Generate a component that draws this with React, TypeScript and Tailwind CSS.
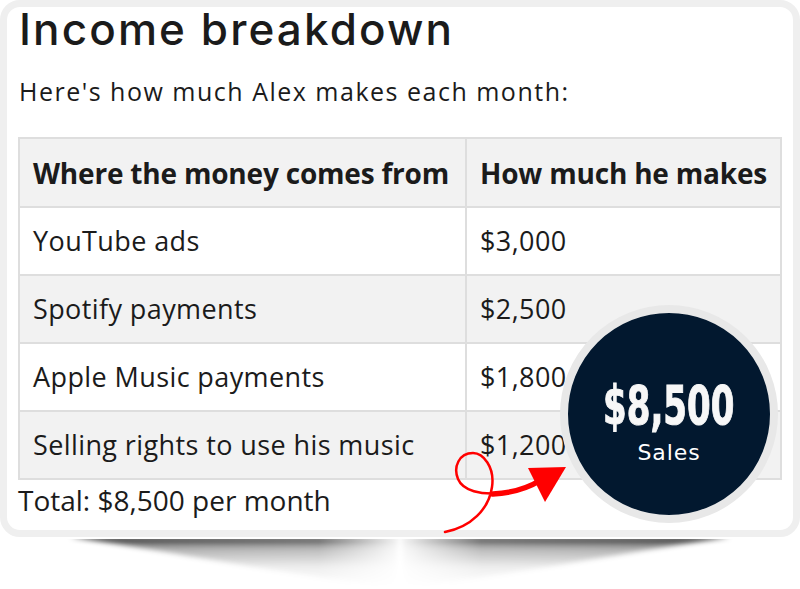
import React from 'react';

const rows = [
  { source: 'YouTube ads', amount: '$3,000' },
  { source: 'Spotify payments', amount: '$2,500' },
  { source: 'Apple Music payments', amount: '$1,800' },
  { source: 'Selling rights to use his music', amount: '$1,200' },
];

const body = { fontFamily: '"Open Sans", "Noto Sans", sans-serif' };

export default function App() {
  return (
    <div className="relative w-[800px] h-[589px] bg-white overflow-hidden">
      {/* card */}
      <div className="relative h-[537px] rounded-[20px] border-[7px] border-[#efefef] bg-white px-[11px]">
        <h1
          className="text-[44px] font-medium leading-[44px] text-[#1b1b1b] tracking-[0.048em] pl-[1px]"
          style={{ fontFamily: 'Inter, "Noto Sans", sans-serif' }}
        >
          Income breakdown
        </h1>
        <p className="mt-[24px] text-[25px] leading-[32px] tracking-[1.5px] text-[#1b1b1b] pl-[1px]" style={body}>
          Here's how much Alex makes each month:
        </p>

        <table className="mt-[30px] w-full border-collapse text-[#1b1b1b]" style={body}>
          <thead>
            <tr className="h-[69px] bg-[#f2f2f2]">
              <th className="w-[447px] border-2 border-[#dedede] pl-[13px] text-left text-[28px] font-bold tracking-[-0.2px]">
                Where the money comes from
              </th>
              <th className="border-2 border-[#dedede] pl-[13px] text-left text-[28px] font-bold tracking-[-0.2px]">
                How much he makes
              </th>
            </tr>
          </thead>
          <tbody>
            {rows.map((r, i) => (
              <tr key={r.source} className={i % 2 === 1 ? 'h-[68px] bg-[#f2f2f2]' : 'h-[68px] bg-white'}>
                <td className="border-2 border-[#dedede] pl-[13px] text-[27px] tracking-[0.4px]">{r.source}</td>
                <td className="border-2 border-[#dedede] pl-[13px] text-[27px] tracking-[0.4px]">{r.amount}</td>
              </tr>
            ))}
          </tbody>
        </table>

        <p className="mt-[2px] text-[28px] leading-[36px] text-[#1b1b1b]" style={body}>
          Total: $8,500 per month
        </p>

        {/* red arrow */}
        <svg className="absolute left-[416px] top-[416px]" width="160" height="120" viewBox="0 0 160 120">
          <path
            d="M22 109 C 48 104, 66 86, 69 64 C 72 44, 60 30, 50 30 C 36 30, 30 44, 35 56 C 40 68, 58 72, 78 70 C 95 68, 108 63, 118 57"
            fill="none"
            stroke="#ff0000"
            strokeWidth="2.5"
            strokeLinecap="round"
          />
          <path
            d="M70 71 C 90 70, 105 65, 118 57"
            fill="none"
            stroke="#ff0000"
            strokeWidth="5.5"
            strokeLinecap="round"
          />
          <path d="M105 45 L143 44 L122 79 Z" fill="#ff0000" />
        </svg>

        {/* total badge */}
        <div className="absolute left-[553px] top-[298px] flex h-[218px] w-[218px] flex-col items-center rounded-full border-[8px] border-[#e8e8e8] bg-[#02182f] text-white">
          <div
            className="mt-[66px] scale-x-[0.7] text-[54px] font-bold leading-[54px] text-[#f7f7f7] [-webkit-text-stroke:1px_#f7f7f7]"
            style={{ fontFamily: '"DejaVu Sans Condensed", "DejaVu Sans", sans-serif' }}
          >
            $8,500
          </div>
          <div
            className="mt-[7px] text-[22px] leading-[26px] tracking-[0.04em]"
            style={{ fontFamily: '"DejaVu Sans", sans-serif' }}
          >
            Sales
          </div>
        </div>
      </div>

      {/* curled shadow under the card */}
      <svg className="absolute left-0 top-[537px]" width="800" height="52" viewBox="0 0 800 52">
        <defs>
          <linearGradient id="shV" x1="0" y1="0" x2="0" y2="1">
            <stop offset="0" stopColor="#000" stopOpacity="0.9" />
            <stop offset="0.22" stopColor="#000" stopOpacity="0.35" />
            <stop offset="0.6" stopColor="#000" stopOpacity="0.08" />
            <stop offset="1" stopColor="#000" stopOpacity="0" />
          </linearGradient>
          <linearGradient id="fadeL" x1="0" y1="0" x2="1" y2="0">
            <stop offset="0" stopColor="#fff" stopOpacity="1" />
            <stop offset="0.75" stopColor="#fff" stopOpacity="0.8" />
            <stop offset="1" stopColor="#fff" stopOpacity="0" />
          </linearGradient>
          <linearGradient id="fadeR" x1="1" y1="0" x2="0" y2="0">
            <stop offset="0" stopColor="#fff" stopOpacity="1" />
            <stop offset="0.75" stopColor="#fff" stopOpacity="0.8" />
            <stop offset="1" stopColor="#fff" stopOpacity="0" />
          </linearGradient>
          <mask id="mL">
            <rect x="60" y="0" width="345" height="52" fill="url(#fadeL)" />
          </mask>
          <mask id="mR">
            <rect x="395" y="0" width="345" height="52" fill="url(#fadeR)" />
          </mask>
          <filter id="blur" x="-10%" y="-50%" width="120%" height="200%">
            <feGaussianBlur stdDeviation="2.5" />
          </filter>
        </defs>
        <g mask="url(#mL)">
          <path d="M70 0 L400 0 L395 50 C 300 40, 180 16, 70 0 Z" fill="url(#shV)" filter="url(#blur)" />
        </g>
        <g mask="url(#mR)">
          <path d="M730 0 L400 0 L405 50 C 500 40, 620 16, 730 0 Z" fill="url(#shV)" filter="url(#blur)" />
        </g>
        <rect x="0" y="0" width="800" height="2" fill="#fff" />
      </svg>
    </div>
  );
}
